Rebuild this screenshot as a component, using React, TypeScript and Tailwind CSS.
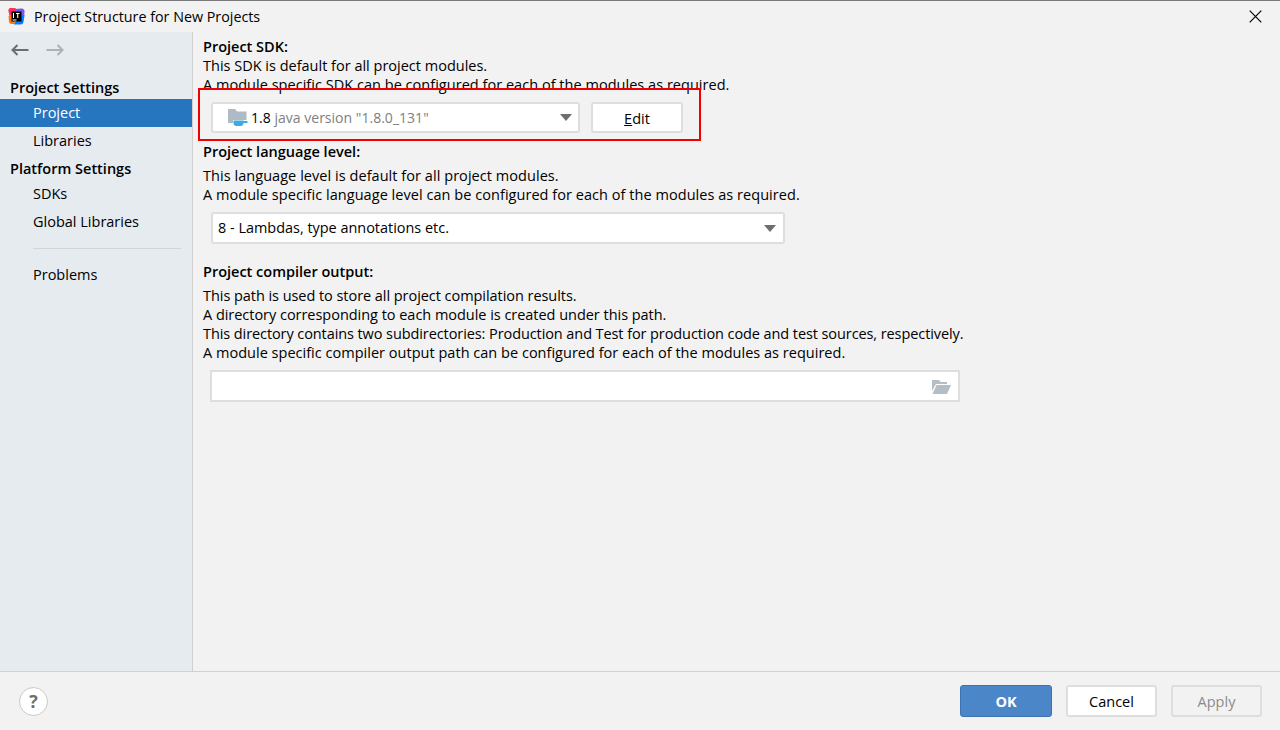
const AppLogo = () => (
  <svg width="17" height="17" viewBox="0 0 17 17">
    <path d="M1 5 A4 4 0 0 1 8 1 L11 3 L8 10 L2 12 Z" fill="#fe315d" />
    <path d="M7 1 L13 0.5 A3 3 0 0 1 16.5 4 L16 10 L10 8 Z" fill="#7b55f0" />
    <path d="M0.5 8 L5 6 L7 16 L3 16 A2.5 2.5 0 0 1 1 14 Z" fill="#f97a12" />
    <path d="M10 9 L16.5 7 L15.5 14 A3 3 0 0 1 12.5 16.5 L6 16.5 Z" fill="#087cfa" />
    <rect x="3.5" y="3.5" width="10" height="10" fill="#000" />
    <rect x="4.5" y="11.5" width="4" height="1" fill="#fff" />
    <path d="M5 5h1v5h-1zM8 5h3.5v1h-1.2v4h-1.1v-4h-1.2z" fill="#fff" />
  </svg>
);

const BackArrow = ({ flip, color }: { flip?: boolean; color: string }) => (
  <svg width="18" height="12" viewBox="0 0 18 12" fill="none" stroke={color} strokeWidth="2" className={flip ? '-scale-x-100' : ''}>
    <path d="M1.5 6 H17.5 M6.5 1 L1.5 6 L6.5 11" />
  </svg>
);

const CloseIcon = () => (
  <svg width="13" height="13" viewBox="0 0 13 13" fill="none" stroke="#000" strokeWidth="1.2">
    <path d="M0.7 0.7 L12.3 12.3 M12.3 0.7 L0.7 12.3" />
  </svg>
);

const FolderCup = () => (
  <svg width="20" height="19" viewBox="0 0 20 19">
    <path d="M0 1 H7 L9 3.5 H18.5 V12 H5 V15 H0 Z" fill="#aebac4" />
    <path d="M5.5 12.5 H15.5 V15 A3 3 0 0 1 12.5 18 H8.5 A3 3 0 0 1 5.5 15 Z" fill="#40a9e0" />
    <path d="M15 13 H19.5 V15 H15 Z" fill="#40a9e0" />
  </svg>
);

const OpenFolder = () => (
  <svg width="19" height="15" viewBox="0 0 19 15">
    <path d="M0 1 H7 L8.5 3 H15 V5 H4 L0 12 Z" fill="#b4bec7" />
    <path d="M4.5 6 H19 L15 15 H0.5 Z" fill="#b4bec7" />
  </svg>
);

const Caret = () => (
  <div className="w-0 h-0 border-l-[6px] border-r-[6px] border-t-[7px] border-l-transparent border-r-transparent border-t-[#6e6e6e]" />
);

const SideHeader = ({ label }: { label: string }) => (
  <div className="pl-2.5 pt-[2px] font-semibold h-[25px] flex items-center">{label}</div>
);

const SideItem = ({ label, active }: { label: string; active?: boolean }) => (
  <div className={`pl-[33px] h-7 flex items-center ${active ? 'bg-[#2675bf] text-white' : ''}`}>{label}</div>
);

export default function App() {
  return (
    <div className="w-[1280px] h-[730px] flex flex-col bg-[#f2f2f2] text-[14.5px] text-black overflow-hidden relative font-['Open_Sans',sans-serif] border-t border-[#7a7a7a]">
      {/* title bar */}
      <div className="h-[31px] shrink-0 flex items-center pl-[8px] pr-[18px] gap-[9px]">
        <AppLogo />
        <span className="flex-1 text-[14.3px]">Project Structure for New Projects</span>
        <CloseIcon />
      </div>

      <div className="flex-1 flex min-h-0">
        {/* sidebar */}
        <div className="w-[193px] shrink-0 bg-[#e6ebf0] border-r border-[#d1d1d1] flex flex-col">
          <div className="h-[36px] flex items-center pl-[11px] gap-[17px] mb-[6px]">
            <BackArrow color="#6e6e6e" />
            <BackArrow flip color="#afb1b3" />
          </div>
          <SideHeader label="Project Settings" />
          <SideItem label="Project" active />
          <SideItem label="Libraries" />
          <SideHeader label="Platform Settings" />
          <SideItem label="SDKs" />
          <SideItem label="Global Libraries" />
          <div className="ml-[33px] mr-[11px] mt-3 mb-3 border-t border-[#d1d5da]" />
          <SideItem label="Problems" />
        </div>

        {/* main */}
        <div className="flex-1 pl-[10px] pt-[5px] leading-[19px]">
          <div className="font-semibold">Project SDK:</div>
          <div>This SDK is default for all project modules.</div>
          <div className="tracking-[0.03px]">A module specific SDK can be configured for each of the modules as required.</div>
          <div className="flex gap-[11px] mt-[8px] ml-2 h-[31px]">
            <div className="w-[369px] bg-white border-2 border-[#dedede] rounded-[3px] flex items-center pl-[15px] pr-[6px] text-[14.05px]">
              <FolderCup />
              <span className="flex-1 ml-[3px]">1.8 <span className="text-[#808080]">java version "1.8.0_131"</span></span>
              <Caret />
            </div>
            <div className="w-[92px] bg-white border-2 border-[#dedede] rounded-[3px] flex items-center justify-center"><span className="pt-px"><span className="underline">E</span>dit</span></div>
          </div>

          <div className="font-semibold mt-[9px]">Project language level:</div>
          <div className="mt-[5px] tracking-[0.05px]">This language level is default for all project modules.</div>
          <div className="tracking-[0.045px]">A module specific language level can be configured for each of the modules as required.</div>
          <div className="w-[574px] h-[32px] mt-[8px] ml-2 bg-white border-2 border-[#dedede] rounded-[3px] flex items-center pl-[5px] pr-[7px]">
            <span className="flex-1 text-[14.45px] pb-px">8 - Lambdas, type annotations etc.</span>
            <Caret />
          </div>

          <div className="font-semibold mt-[18px]">Project compiler output:</div>
          <div className="mt-[5px] tracking-[-0.05px]">This path is used to store all project compilation results.</div>
          <div className="tracking-[-0.03px]">A directory corresponding to each module is created under this path.</div>
          <div className="tracking-[-0.087px]">This directory contains two subdirectories: Production and Test for production code and test sources, respectively.</div>
          <div className="tracking-[0.02px]">A module specific compiler output path can be configured for each of the modules as required.</div>
          <div className="w-[750px] h-[32px] mt-[8px] ml-[7px] bg-white border-2 border-[#dedede] flex items-center justify-end pr-[7px]">
            <OpenFolder />
          </div>
        </div>
      </div>

      {/* footer */}
      <div className="h-[59px] shrink-0 border-t border-[#d1d1d1] flex items-center justify-between pl-[19px] pr-[18px]">
        <div className="w-[29px] h-[29px] rounded-full bg-white border border-[#c9c9c9] flex items-center justify-center font-bold text-[#6e6e6e] text-[18px]">?</div>
        <div className="flex gap-[14px]">
          <div className="w-[92px] h-[32px] rounded-[3px] bg-[#4a86c8] border border-[#3d74b0] text-white font-bold flex items-center justify-center pt-px">OK</div>
          <div className="w-[91px] h-[32px] rounded-[3px] bg-white border-2 border-[#dedede] flex items-center justify-center pt-px">Cancel</div>
          <div className="w-[91px] h-[32px] rounded-[3px] border-2 border-[#dedede] text-[#8c8c8c] flex items-center justify-center pt-px">Apply</div>
        </div>
      </div>

      {/* red annotation box */}
      <div className="absolute left-[198px] top-[87px] w-[503px] h-[53px] border-2 border-[#f00000] pointer-events-none" />
    </div>
  );
}
